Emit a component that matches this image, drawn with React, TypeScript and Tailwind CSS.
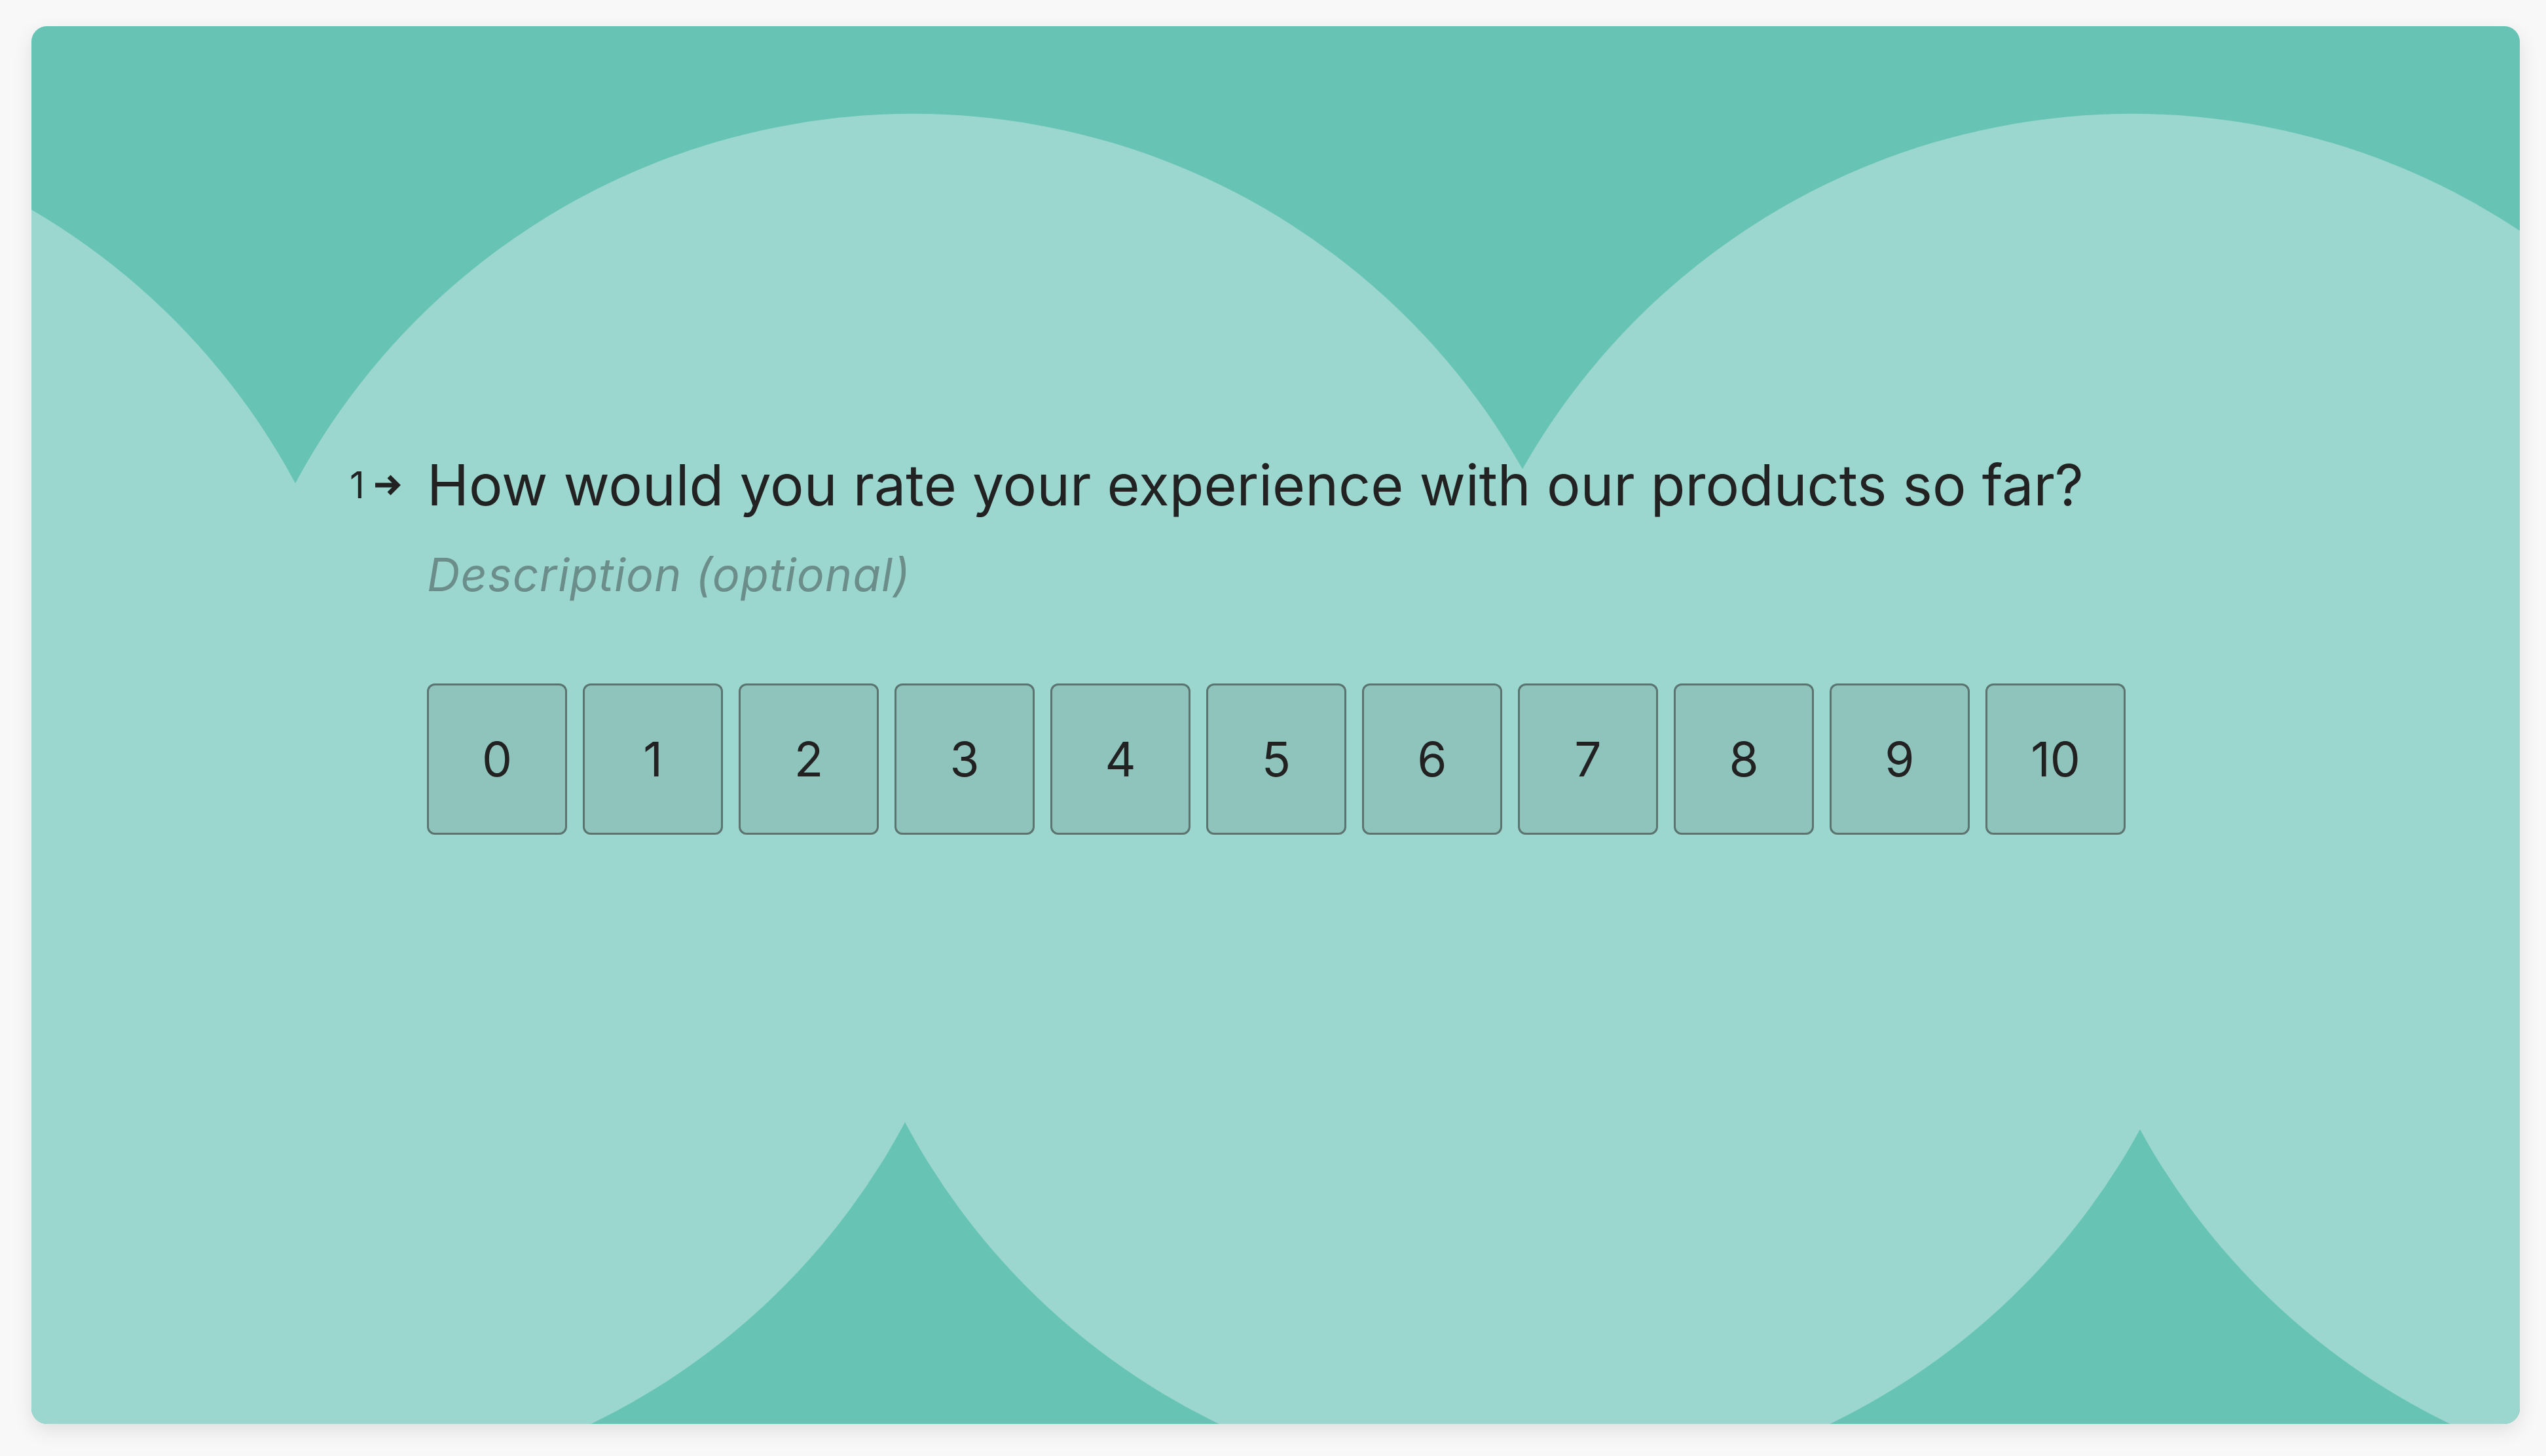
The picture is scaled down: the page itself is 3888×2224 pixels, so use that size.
import React from "react";

const DARK = "#67c4b5";
const LIGHT = "#9cd7cf";

function topShape(cx: number) {
  const r = 1070;
  const w = 1069.1;
  return `M ${cx - w} 1160 A ${r} ${r} 0 0 1 ${cx + w} 1160 Z`;
}

function bottomShape(cx: number) {
  const r = 1072;
  const w = 1069;
  return `M ${cx - w} 1250 A ${r} ${r} 0 0 0 ${cx + w} 1250 Z`;
}

function Background() {
  const aRow = [-540, 1346, 3208, 5070];
  const bRow = [-1448, 388, 2280, 4160];
  return (
    <svg
      className="absolute inset-0 h-full w-full"
      viewBox="0 0 3800 2135"
      preserveAspectRatio="none"
    >
      <rect x="0" y="0" width="3800" height="2135" fill={LIGHT} />
      <rect x="0" y="0" width="3800" height="1150" fill={DARK} />
      {aRow.map((cx) => (
        <path key={"a" + cx} d={topShape(cx)} fill={LIGHT} />
      ))}
      <rect x="0" y="1260" width="3800" height="875" fill={DARK} />
      {bRow.map((cx) => (
        <path key={"b" + cx} d={bottomShape(cx)} fill={LIGHT} />
      ))}
    </svg>
  );
}

function Arrow() {
  return (
    <svg width="40" height="36" viewBox="0 0 40 36" className="block">
      <path d="M0 18 H34" stroke="#222222" strokeWidth="7" fill="none" />
      <path
        d="M21 5 L34 18 L21 31"
        stroke="#222222"
        strokeWidth="7"
        fill="none"
        strokeLinejoin="miter"
      />
    </svg>
  );
}

export default function App() {
  const values = [0, 1, 2, 3, 4, 5, 6, 7, 8, 9, 10];
  return (
    <div
      className="h-[2224px] w-full bg-[#f8f8f8] pt-[40px] pl-[48px] pr-[40px]"
      style={{ fontFamily: "Inter, 'Noto Sans', sans-serif" }}
    >
      <div className="relative h-[2135px] w-full overflow-hidden rounded-[24px] shadow-[0_10px_30px_rgba(0,0,0,0.10)]">
        <Background />
        <div className="relative flex items-start pl-[486px] pt-[650px]">
          <div className="flex h-[102px] w-[118px] shrink-0 items-center">
            <span className="text-[56px] leading-none text-[#222222]">1</span>
            <span className="ml-[16px]">
              <Arrow />
            </span>
          </div>
          <div className="flex flex-col">
            <h1 className="text-[86px] leading-[102px] font-normal text-[#222222]">
              How would you rate your experience with our products so far?
            </h1>
            <p className="mt-[44px] text-[70px] leading-[83px] italic tracking-[1px] text-[#6b8e8a]">
              Description (optional)
            </p>
            <div className="mt-[125px] flex gap-[24px]">
              {values.map((v) => (
                <div
                  key={v}
                  className="flex h-[231px] w-[214px] items-center justify-center rounded-[12px] border-[3px] border-[#5c7470] bg-[#8fc4bd] text-[73px] text-[#222222]"
                >
                  {v}
                </div>
              ))}
            </div>
          </div>
        </div>
      </div>
    </div>
  );
}
